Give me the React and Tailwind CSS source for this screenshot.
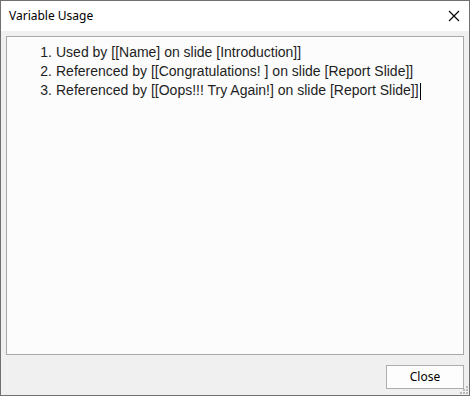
import React from "react";

const lines = [
  "Used by [[Name] on slide [Introduction]]",
  "Referenced by [[Congratulations! ] on slide [Report Slide]]",
  "Referenced by [[Oops!!! Try Again!] on slide [Report Slide]]",
];

export default function App() {
  return (
    <div className="w-[470px] h-[396px] border border-[#707070] bg-[#f0f0f0] flex flex-col font-['Noto_Sans',sans-serif]">
      {/* Title bar */}
      <div className="h-[30px] bg-white flex items-center justify-between pl-[8px] pr-[9px] shrink-0">
        <span className="text-[12px] text-black">Variable Usage</span>
        <svg width="12" height="12" viewBox="0 0 12 12" className="text-black">
          <path d="M1 1 L11 11 M11 1 L1 11" stroke="currentColor" strokeWidth="1.1" fill="none" />
        </svg>
      </div>

      {/* Body */}
      <div className="flex-1 flex flex-col pt-[5px] px-[5px] relative">
        <div className="h-[319px] border border-[#a8a8a8] bg-[#fcfcfc] pt-[6px] font-['Liberation_Sans',Arial,sans-serif] text-[14px] leading-[19px] text-[#1e1e1e]">
          <ol>
            {lines.map((t, i) => (
              <li key={i} className="flex">
                <span className="w-[49px] text-right pr-[4px] shrink-0">{i + 1}.</span>
                <span>
                  {t}
                  {i === 2 && <span className="inline-block w-px h-[17px] bg-black align-middle ml-[1px]" />}
                </span>
              </li>
            ))}
          </ol>
        </div>

        <div className="flex justify-end mt-[10px]">
          <button className="w-[78px] h-[24px] border border-[#adadad] bg-[#fdfdfd] text-[12px] text-black">
            Close
          </button>
        </div>

        {/* Resize grip */}
        <div className="absolute right-[1px] bottom-[1px] grid grid-cols-3 gap-[1px]">
          <span />
          <span />
          <span className="w-[2px] h-[2px] bg-[#b8b8b8]" />
          <span />
          <span className="w-[2px] h-[2px] bg-[#b8b8b8]" />
          <span className="w-[2px] h-[2px] bg-[#b8b8b8]" />
          <span className="w-[2px] h-[2px] bg-[#b8b8b8]" />
          <span className="w-[2px] h-[2px] bg-[#b8b8b8]" />
          <span className="w-[2px] h-[2px] bg-[#b8b8b8]" />
        </div>
      </div>
    </div>
  );
}
